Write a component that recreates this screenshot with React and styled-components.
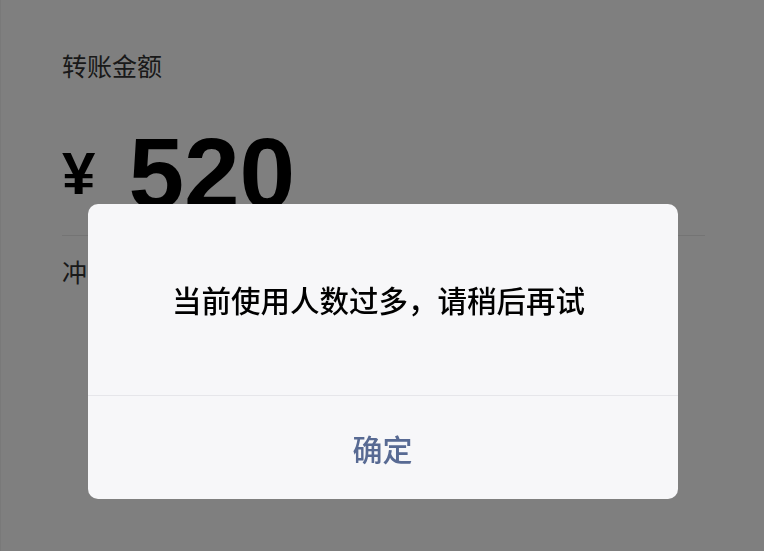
import React from 'react';
import styled, { createGlobalStyle } from 'styled-components';

const GlobalStyle = createGlobalStyle`
    html, body {
        margin: 0;
        padding: 0;
        background: #fff;
    }
    body {
        font-family: "Noto Sans CJK SC", "Noto Sans", sans-serif;
        color: #333;
    }
`;

const Page = styled.div`
    min-height: 551px;
    padding: 50px 61px 0 61px;
    box-sizing: border-box;
    background: #fff;
    border-left: 1px solid #f2f2f2;
`;

const Label = styled.div`
    font-size: 25px;
    line-height: 30px;
    color: #333;
`;

const AmountRow = styled.div`
    display: flex;
    align-items: center;
    margin-top: 38px;
    height: 110px;
    color: #000;
    font-family: "Liberation Sans", Arial, sans-serif;
    font-weight: bold;
`;

const Currency = styled.span`
    font-size: 60px;
    margin-right: 33px;
`;

const Amount = styled.span`
    font-size: 100px;
`;

const Divider = styled.div`
    height: 1px;
    width: 643px;
    background: #e8e8e8;
    margin-top: 7px;
`;

const Note = styled.div`
    margin-top: 20px;
    font-size: 25px;
    line-height: 30px;
    color: #333;
`;

const Mask = styled.div`
    position: fixed;
    inset: 0;
    background: rgba(0, 0, 0, 0.5);
    display: flex;
    justify-content: center;
    align-items: flex-start;
    padding-top: 204px;
    padding-left: 1px;
`;

const Dialog = styled.div`
    width: 590px;
    height: 295px;
    background: #f7f7f9;
    border-radius: 10px;
    display: flex;
    flex-direction: column;
    overflow: hidden;
`;

const Message = styled.div`
    height: 192px;
    display: flex;
    align-items: center;
    justify-content: center;
    font-size: 29.5px;
    font-weight: 500;
    color: #000;
    border-bottom: 1px solid #e6e6ea;
    padding-bottom: 2px;
    padding-right: 8px;
    box-sizing: border-box;
`;

const Button = styled.button`
    flex: 1;
    border: 0;
    background: transparent;
    font-family: "Noto Sans CJK SC", "Noto Sans", sans-serif;
    font-size: 30px;
    font-weight: 500;
    color: #586a93;
    padding: 0;
    cursor: pointer;
`;

export default function App() {
    return (
        <>
            <GlobalStyle />
            <Page>
                <Label>转账金额</Label>
                <AmountRow>
                    <Currency>¥</Currency>
                    <Amount>520</Amount>
                </AmountRow>
                <Divider />
                <Note>冲</Note>
            </Page>
            <Mask>
                <Dialog>
                    <Message>当前使用人数过多，请稍后再试</Message>
                    <Button>确定</Button>
                </Dialog>
            </Mask>
        </>
    );
}
